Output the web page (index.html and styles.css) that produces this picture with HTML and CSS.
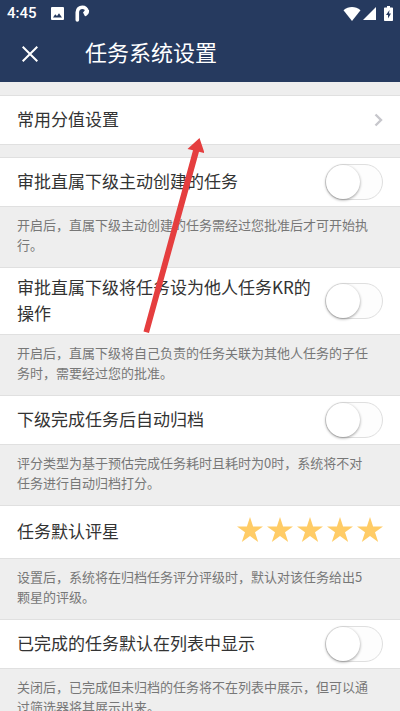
FILE: index.html
```html
<!DOCTYPE html>
<html lang="zh-CN">
  <head>
    <meta charset="utf-8" />
    <meta name="viewport" content="width=device-width, initial-scale=1" />
    <title>任务系统设置</title>
    <link rel="stylesheet" href="styles.css">
  </head>

  <body>
    <header class="top">
      <div class="status-bar">
        <span class="time">4:45</span>
        <svg class="photo" width="13" height="13" viewBox="0 0 13 13">
          <path fill="#fff" fill-rule="evenodd" d="M1 0h11a1 1 0 0 1 1 1v11a1 1 0 0 1-1 1H1a1 1 0 0 1-1-1V1a1 1 0 0 1 1-1zM2 10.500h9L8 6.200 6 9 4.200 7.200z" />
        </svg>
        <svg class="app" width="15" height="18" viewBox="0 0 15 18">
          <path fill="none" stroke="#fff" stroke-width="3.600" stroke-linecap="round" d="M2.300 15V7.200C2.300 4 4.500 2.300 7.300 2.300c2.600 0 4.500 1.500 4.500 3.600" />
          <path fill="#fff" d="M8 7.500l3-3.500 3 1c.4 2.500-.8 5.500-4 6.300z" />
        </svg>
        <span class="spacer"></span>
        <svg class="wifi" width="18" height="14" viewBox="0 0 18 14">
          <path fill="#fff" d="M9 14L.5 3.200C3 1 6 0 9 0s6 1 8.500 3.200z" />
        </svg>
        <svg class="signal" width="13" height="13" viewBox="0 0 13 13">
          <path fill="#fff" d="M13 0v13H0z" />
        </svg>
        <svg class="battery" width="9" height="15" viewBox="0 0 9 15">
          <path fill="#fff" d="M3 0h3v1.500h2.200a.8.8 0 0 1 .8.8V14.200a.8.8 0 0 1-.8.8H.8a.8.8 0 0 1-.8-.8V2.300a.8.8 0 0 1 .8-.8H3z" />
          <path fill="#263a5f" d="M5.500 4L2 9h2v3.500L7 7.500H5z" />
        </svg>
      </div>
      <div class="nav">
        <button class="close" type="button" aria-label="关闭">
          <svg width="16" height="16" viewBox="0 0 16 16">
            <path stroke="#fff" stroke-width="2" d="M.7.7l14.600 14.600M15.300.7L.7 15.300" />
          </svg>
        </button>
        <h1>任务系统设置</h1>
      </div>
    </header>

    <main>
      <a class="cell link" href="#score">
        <span class="label">常用分值设置</span>
        <svg width="9" height="14" viewBox="0 0 9 14">
          <path fill="none" stroke="#c7c7cc" stroke-width="2.400" d="M1.500 1.500L7 7l-5.500 5.500" />
        </svg>
      </a>

      <div class="cell">
        <label class="label" for="approve-create">审批直属下级主动创建的任务</label>
        <input class="switch" id="approve-create" type="checkbox" />
      </div>
      <p class="hint">开启后，直属下级主动创建的任务需经过您批准后才可开始执行。</p>

      <div class="cell">
        <label class="label" for="approve-kr">审批直属下级将任务设为他人任务KR的操作</label>
        <input class="switch" id="approve-kr" type="checkbox" />
      </div>
      <p class="hint">开启后，直属下级将自己负责的任务关联为其他人任务的子任务时，需要经过您的批准。</p>

      <div class="cell">
        <label class="label" for="auto-archive">下级完成任务后自动归档</label>
        <input class="switch" id="auto-archive" type="checkbox" />
      </div>
      <p class="hint">评分类型为基于预估完成任务耗时且耗时为0时，系统将不对任务进行自动归档打分。</p>

      <div class="cell rating">
        <span class="label" id="rating-label">任务默认评星</span>
        <div class="stars" role="group" aria-labelledby="rating-label">
          <button type="button" aria-label="1星"><svg viewBox="0 0 26 25"><path d="M13 0l3.100 9.500H26l-8 5.700L21.200 25 13 19l-8.200 6L8 15.200 0 9.500h9.900z" /></svg></button>
          <button type="button" aria-label="2星"><svg viewBox="0 0 26 25"><path d="M13 0l3.100 9.500H26l-8 5.700L21.200 25 13 19l-8.200 6L8 15.200 0 9.500h9.900z" /></svg></button>
          <button type="button" aria-label="3星"><svg viewBox="0 0 26 25"><path d="M13 0l3.100 9.500H26l-8 5.700L21.200 25 13 19l-8.200 6L8 15.200 0 9.500h9.900z" /></svg></button>
          <button type="button" aria-label="4星"><svg viewBox="0 0 26 25"><path d="M13 0l3.100 9.500H26l-8 5.700L21.200 25 13 19l-8.200 6L8 15.200 0 9.500h9.900z" /></svg></button>
          <button type="button" aria-label="5星"><svg viewBox="0 0 26 25"><path d="M13 0l3.100 9.500H26l-8 5.700L21.200 25 13 19l-8.200 6L8 15.200 0 9.500h9.900z" /></svg></button>
        </div>
      </div>
      <p class="hint">设置后，系统将在归档任务评分评级时，默认对该任务给出5颗星的评级。</p>

      <div class="cell">
        <label class="label" for="show-done">已完成的任务默认在列表中显示</label>
        <input class="switch" id="show-done" type="checkbox" />
      </div>
      <p class="hint">关闭后，已完成但未归档的任务将不在列表中展示，但可以通过筛选器将其展示出来。</p>
    </main>

    <!-- arrow pointing at the first row -->
    <svg class="arrow" width="62" height="196" viewBox="0 0 62 196">
      <path fill="#e53e3f" d="M57.500 0l5 15-5.500-1.300L7 195l-5.500-1.500L51 12.300 45.500 11z" />
    </svg>
  </body>
</html>
```

FILE: styles.css
```css
* {
  box-sizing: border-box;
}

body {
  position: relative;
  margin: 0;
  background: #eee;
  color: #333;
  font-family: Roboto, "Noto Sans CJK SC", sans-serif;
}

button {
  padding: 0;
  border: none;
  background: none;
  cursor: pointer;
}

svg {
  display: block;
}

/* header */
.top {
  height: 82px;
  background: #263a5f;
  color: #fff;
}

.status-bar {
  display: flex;
  align-items: center;
  height: 27px;
  padding: 0 7px;
}

.time {
  font-size: 15px;
  font-weight: 500;
  line-height: 27px;
}

.photo {
  margin-left: 14px;
}

.app {
  margin-left: 11px;
}

.spacer {
  flex: 1;
}

.signal {
  margin-left: 2px;
}

.battery {
  margin-left: 8px;
}

.nav {
  display: flex;
  align-items: center;
  height: 54px;
  padding: 0 22px;
}

.nav h1 {
  margin: 0 0 0 47px;
  font-size: 22px;
  font-weight: 400;
  line-height: 32px;
}

/* rows */
.cell {
  display: flex;
  align-items: center;
  justify-content: space-between;
  gap: 10px;
  min-height: 50px;
  padding: 6px 17px;
  border-top: 1px solid #e0e0e0;
  border-bottom: 1px solid #e0e0e0;
  background: #fff;
  color: #333;
  text-decoration: none;
}

.link {
  margin: 13px 0 12px;
}

.rating {
  min-height: 54px;
}

.label {
  padding-bottom: 2px;
  font-family: "Noto Sans CJK SC", sans-serif;
  font-size: 17px;
  line-height: 26px;
}

.hint {
  margin: 0;
  padding: 8px 28px 12px 17px;
  color: #777;
  font-family: "Noto Sans CJK SC", sans-serif;
  font-size: 13px;
  line-height: 20px;
}

/* switch */
.switch {
  flex: none;
  width: 58px;
  height: 36px;
  margin: 0;
  border: 1px solid #dfdfdf;
  border-radius: 18px;
  background: #fdfdfd;
  appearance: none;
  cursor: pointer;
}

.switch::before {
  content: "";
  display: block;
  width: 34px;
  height: 34px;
  border-radius: 50%;
  background: #fff;
  box-shadow: 0 1px 3px rgba(0, 0, 0, 0.4);
}

.switch:checked {
  background: #4cd964;
}

.switch:checked::before {
  margin-left: 22px;
}

/* stars */
.stars {
  display: flex;
  gap: 4px;
  padding-bottom: 5px;
}

.stars svg {
  width: 26px;
  height: 25px;
  fill: #ffcc66;
}

.arrow {
  position: absolute;
  top: 138px;
  left: 142px;
  pointer-events: none;
}
```
